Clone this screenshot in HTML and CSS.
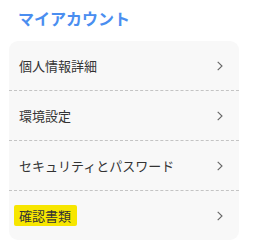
FILE: index.html
```html
<!DOCTYPE html>
<html lang="ja">
<head>
<meta charset="utf-8">
<link rel="stylesheet" href="styles.css">
</head>
<body>
<div class="page">
  <h1 class="title">マイアカウント</h1>
  <div class="card">
    <div class="row"><span class="label">個人情報詳細</span><svg class="chev" width="6" height="10" viewBox="0 0 6 10"><path d="M0.7 0.8 L5 5 L0.7 9.2" fill="none" stroke="#666" stroke-width="1.1"/></svg></div>
    <div class="row"><span class="label">環境設定</span><svg class="chev" width="6" height="10" viewBox="0 0 6 10"><path d="M0.7 0.8 L5 5 L0.7 9.2" fill="none" stroke="#666" stroke-width="1.1"/></svg></div>
    <div class="row"><span class="label">セキュリティとパスワード</span><svg class="chev" width="6" height="10" viewBox="0 0 6 10"><path d="M0.7 0.8 L5 5 L0.7 9.2" fill="none" stroke="#666" stroke-width="1.1"/></svg></div>
    <div class="row"><span class="label mark">確認書類</span><svg class="chev" width="6" height="10" viewBox="0 0 6 10"><path d="M0.7 0.8 L5 5 L0.7 9.2" fill="none" stroke="#666" stroke-width="1.1"/></svg></div>
  </div>
</div>
</body>
</html>
```
FILE: styles.css
```css
html, body { margin: 0; padding: 0; background: #fff; }
body { font-family: "Noto Sans CJK JP", "Noto Sans", sans-serif; }
.page { padding: 5px 16px 0 9px; }
.title {
  margin: 0 0 10px 9px;
  font-size: 16px;
  line-height: 26px;
  font-weight: 700;
  color: #4a8ef0;
}
.card {
  background: #f8f8f8;
  border-radius: 9px;
  display: flex;
  flex-direction: column;
}
.row {
  height: 49px;
  display: flex;
  align-items: center;
  justify-content: space-between;
  padding: 0 16px 0 10px;
  border-bottom: 1px dashed #c4c4c4;
}
.row:last-child { border-bottom: none; }
.label {
  font-size: 13px;
  color: #333;
  line-height: 18px;
}
.mark {
  background: #f7e600;
  padding: 2px 6px 1px 5px;
  margin-left: -5px;
  border-radius: 2px;
}
.chev { display: block; }
```
